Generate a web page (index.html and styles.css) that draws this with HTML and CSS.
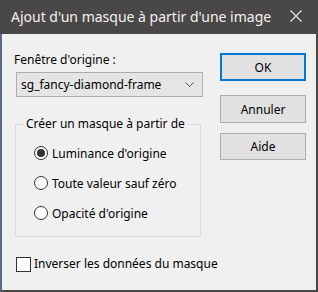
FILE: index.html
```html
<!DOCTYPE html>
<html lang="fr">
<head>
    <meta charset="UTF-8">
    <title>Ajout d'un masque à partir d'une image</title>
    <link rel="stylesheet" href="styles.css">
</head>
<body>
    <div class="window">
        <div class="titlebar">
            <span class="title">Ajout d'un masque à partir d'une image</span>
            <svg class="close" width="12" height="12" viewBox="0 0 12 12">
                <path d="M0.5 0.5 L11.5 11.5 M11.5 0.5 L0.5 11.5" stroke="#e6e6e6" stroke-width="1.1" fill="none"/>
            </svg>
        </div>

        <div class="content">
            <div class="left">
                <div class="label">Fenêtre d'origine :</div>
                <div class="select">
                    <span>sg_fancy-diamond-frame</span>
                    <svg width="9" height="5" viewBox="0 0 9 5">
                        <path d="M0.5 0.5 L4.5 4.5 L8.5 0.5" stroke="#555" stroke-width="1" fill="none"/>
                    </svg>
                </div>

                <fieldset class="group">
                    <legend>Créer un masque à partir de</legend>
                    <div class="radio checked"><span class="dot"></span>Luminance d'origine</div>
                    <div class="radio"><span class="dot"></span>Toute valeur sauf zéro</div>
                    <div class="radio"><span class="dot"></span>Opacité d'origine</div>
                </fieldset>

                <div class="check"><span class="box"></span>Inverser les données du masque</div>
            </div>

            <div class="buttons">
                <button class="btn default">OK</button>
                <button class="btn cancel">Annuler</button>
                <button class="btn help">Aide</button>
            </div>
        </div>
    </div>
</body>
</html>
```

FILE: styles.css
```css
body {
    margin: 0;
    font-family: "Noto Sans", "Open Sans", sans-serif;
    font-size: 12px;
    color: #000;
    background: #f0f0f0;
}

.window {
    width: 318px;
    height: 292px;
    box-sizing: border-box;
    border-left: 2px solid #5b6a8c;
    border-right: 2px solid #4a4846;
    border-bottom: 2px solid #4a4846;
    background: #f0f0f0;
}

.titlebar {
    height: 34px;
    background: #4a4846;
    display: flex;
    align-items: center;
    justify-content: space-between;
    margin-left: -2px;
    margin-right: -2px;
    padding: 0 16px 0 11px;
}

.title {
    color: #f2f2f2;
    font-size: 14px;
    line-height: 20px;
    margin-top: -1px;
    white-space: nowrap;
}

.close {
    display: block;
    margin-top: -2px;
}

.content {
    display: flex;
    padding: 18px 0 0 13px;
}

.left {
    width: 188px;
    white-space: nowrap;
}

.label {
    line-height: 16px;
    margin-left: -1px;
}

.select {
    margin-top: 4px;
    margin-left: 1px;
    height: 25px;
    box-sizing: border-box;
    border: 1px solid #adadad;
    background: #e5e5e5;
    display: flex;
    align-items: center;
    justify-content: space-between;
    padding: 0 8px 0 4px;
}

.group {
    margin: 19px 0 0 0;
    width: 186px;
    box-sizing: border-box;
    border: 1px solid #dcdcdc;
    padding: 13px 0 15px 18px;
}

.group legend {
    padding: 0 2px;
    margin-left: -10px;
    line-height: 16px;
    white-space: nowrap;
}

.radio {
    display: flex;
    align-items: center;
    height: 16px;
    margin-bottom: 14px;
}

.radio:last-child {
    margin-bottom: 0;
}

.radio .dot {
    flex: none;
    width: 14px;
    height: 14px;
    box-sizing: border-box;
    border: 1px solid #333;
    border-radius: 50%;
    background: #fff;
    margin-right: 4px;
    display: flex;
    align-items: center;
    justify-content: center;
}

.radio.checked .dot::after {
    content: "";
    width: 8px;
    height: 8px;
    border-radius: 50%;
    background: #333;
}

.check {
    display: flex;
    align-items: center;
    margin-top: 19px;
    margin-left: 1px;
    line-height: 16px;
}

.check .box {
    flex: none;
    width: 15px;
    height: 15px;
    box-sizing: border-box;
    border: 1px solid #333;
    background: #fff;
    margin-right: 3px;
}

.buttons {
    display: flex;
    flex-direction: column;
    margin-left: 17px;
    padding-top: 1px;
}

.btn {
    width: 86px;
    height: 28px;
    box-sizing: border-box;
    border: 1px solid #adadad;
    background: #e1e1e1;
    font-family: inherit;
    font-size: 12px;
    color: #000;
    padding: 0;
}

.btn.default {
    border: 2px solid #0078d7;
}

.btn.cancel {
    margin-top: 14px;
}

.btn.help {
    margin-top: 10px;
    height: 27px;
}
```
